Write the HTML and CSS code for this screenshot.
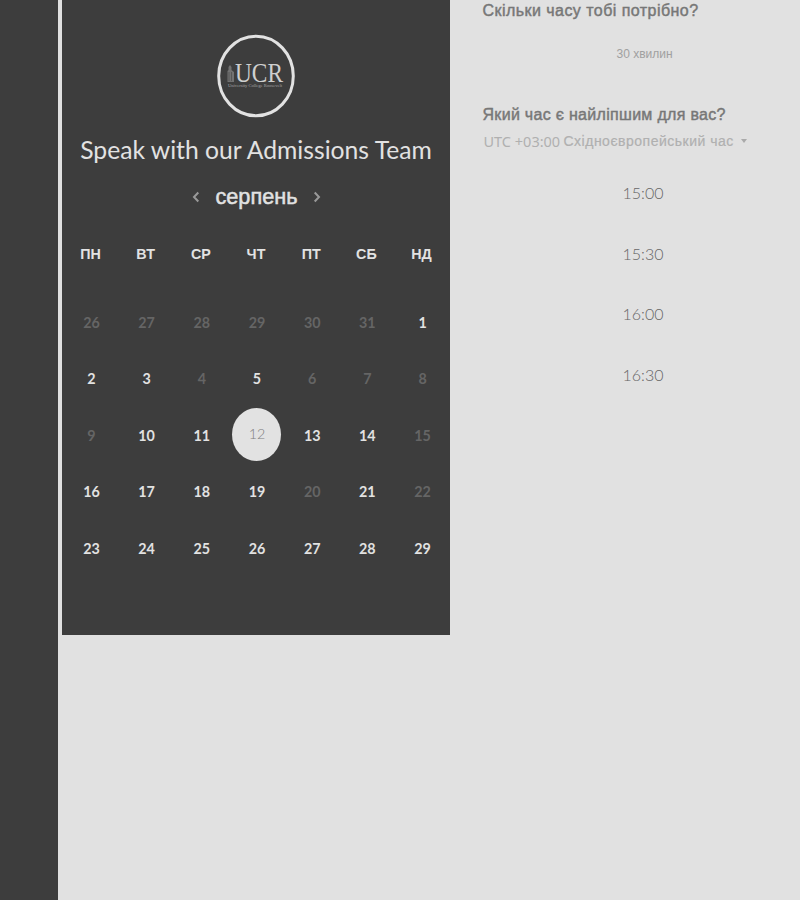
FILE: index.html
```html
<!DOCTYPE html>
<html lang="uk">
<head>
<meta charset="utf-8">
<title>Speak with our Admissions Team</title>
<link rel="stylesheet" href="styles.css">
</head>
<body>
<div class="page">
  <aside class="rail"></aside>
  <main class="card">
    <svg class="logo" width="78" height="84" viewBox="0 0 78 84">
      <ellipse cx="39" cy="42" rx="37.3" ry="39.8" fill="none" stroke="#e2e2e2" stroke-width="3"/>
      <path d="M10.500 48V37l1-1v-3l1.500-2v-4v4l1.500 2v3l2.500 2v10z" fill="#727272"/>
      <path d="M12 38v9M14.500 38v9" stroke="#4c4c4c" stroke-width=".7"/>
      <text class="logo-name" x="18" y="48" textLength="48" lengthAdjust="spacingAndGlyphs">UCR</text>
      <text class="logo-sub" x="11" y="53" textLength="54" lengthAdjust="spacingAndGlyphs">University College Roosevelt</text>
    </svg>
    <h1 class="title">Speak with our Admissions Team</h1>
    <div class="month">
      <svg width="8" height="12" viewBox="0 0 8 12"><path d="M6.300 1.500 2 6l4.300 4.500"/></svg>
      <span class="month-name">серпень</span>
      <svg width="8" height="12" viewBox="0 0 8 12"><path d="M1.700 1.500 6 6l-4.300 4.500"/></svg>
    </div>
    <div class="weekdays"><span>ПН</span><span>ВТ</span><span>СР</span><span>ЧТ</span><span>ПТ</span><span>СБ</span><span>НД</span></div>
    <div class="days">
      <span class="off">26</span><span class="off">27</span><span class="off">28</span><span class="off">29</span><span class="off">30</span><span class="off">31</span><span>1</span>
      <span>2</span><span>3</span><span class="off">4</span><span>5</span><span class="off">6</span><span class="off">7</span><span class="off">8</span>
      <span class="off">9</span><span>10</span><span>11</span><span class="picked">12</span><span>13</span><span>14</span><span class="off">15</span>
      <span>16</span><span>17</span><span>18</span><span>19</span><span class="off">20</span><span>21</span><span class="off">22</span>
      <span>23</span><span>24</span><span>25</span><span>26</span><span>27</span><span>28</span><span>29</span>
    </div>
  </main>
  <section class="options">
    <h2 class="question length">Скільки часу тобі потрібно?</h2>
    <div class="duration">30 хвилин</div>
    <h2 class="question when">Який час є найліпшим для вас?</h2>
    <div class="zone"><span class="utc">UTC +03:00</span><span class="zone-name">Східноєвропейський час</span><i class="caret"></i></div>
    <div class="times"><span>15:00</span><span>15:30</span><span>16:00</span><span>16:30</span></div>
  </section>
</div>
</body>
</html>
```
FILE: styles.css
```css
* { box-sizing: border-box; }
body { margin: 0; background: #e1e1e1; font-family: "Liberation Sans", sans-serif; }
.page { display: flex; height: 900px; overflow: hidden; white-space: nowrap; }
.rail { flex: none; width: 58px; background: #3d3d3d; }
.card { flex: none; width: 388px; height: 635px; margin-left: 4px; padding-top: 34px; background: #3d3d3d; color: #e2e2e2; display: flex; flex-direction: column; align-items: center; }
.logo { display: block; flex: none; }
.logo-name { font: 27px "Liberation Serif", serif; fill: #cfcfcf; }
.logo-sub { font: 4px "Liberation Serif", serif; fill: #a5a5a5; }
.title { margin: 15px 0 0; font: 400 24.700px/34px Lato, sans-serif; }
.month { display: flex; align-items: center; gap: 15.500px; height: 30px; margin-top: 14px; padding: 1px 0 0 1px; }
.month svg { fill: none; stroke: #999; stroke-width: 2; }
.month-name { font-size: 21.700px; line-height: 30px; -webkit-text-stroke: .5px #e2e2e2; }
.weekdays, .days { display: grid; grid-template-columns: repeat(7, 55.200px); justify-items: center; align-items: center; }
.weekdays { margin-top: 33px; height: 20px; font-size: 14.300px; font-weight: 700; }
.days { margin-top: 30px; padding-left: 2px; grid-auto-rows: 56.500px; font: 700 14.300px Lato, sans-serif; }
.off { color: #656565; }
.picked { width: 49px; height: 53px; margin: -2px 2px 0 0; border-radius: 50%; background: #e2e2e2; color: #808080; font-weight: 300; line-height: 52px; text-align: center; padding-left: 2px; }
.options { flex: 1; padding-left: 32.500px; color: #777; }
.question { margin: 0; font-size: 16px; line-height: 20px; font-weight: 400; -webkit-text-stroke: .45px #777; letter-spacing: .3px; }
.length { padding-top: 1px; letter-spacing: .45px; }
.duration { margin-top: 23px; width: 324px; text-align: center; font-size: 12px; line-height: 20px; color: #a0a0a0; }
.when { margin-top: 41px; }
.zone { display: flex; align-items: center; height: 20px; margin-top: 6px; padding-left: 1px; color: #b0b0b0; font-size: 14px; }
.utc { width: 80px; font: 14.500px "Noto Sans", sans-serif; }
.zone-name { letter-spacing: .5px; -webkit-text-stroke: .2px #b0b0b0; }
.caret { margin-left: 7px; border: 3px solid transparent; border-top: 4px solid #aaa; border-bottom: 0; }
.times { display: grid; grid-auto-rows: 60.700px; align-items: center; margin-top: 11px; width: 321px; text-align: center; font: 300 16px Lato, sans-serif; color: #666; }
```
